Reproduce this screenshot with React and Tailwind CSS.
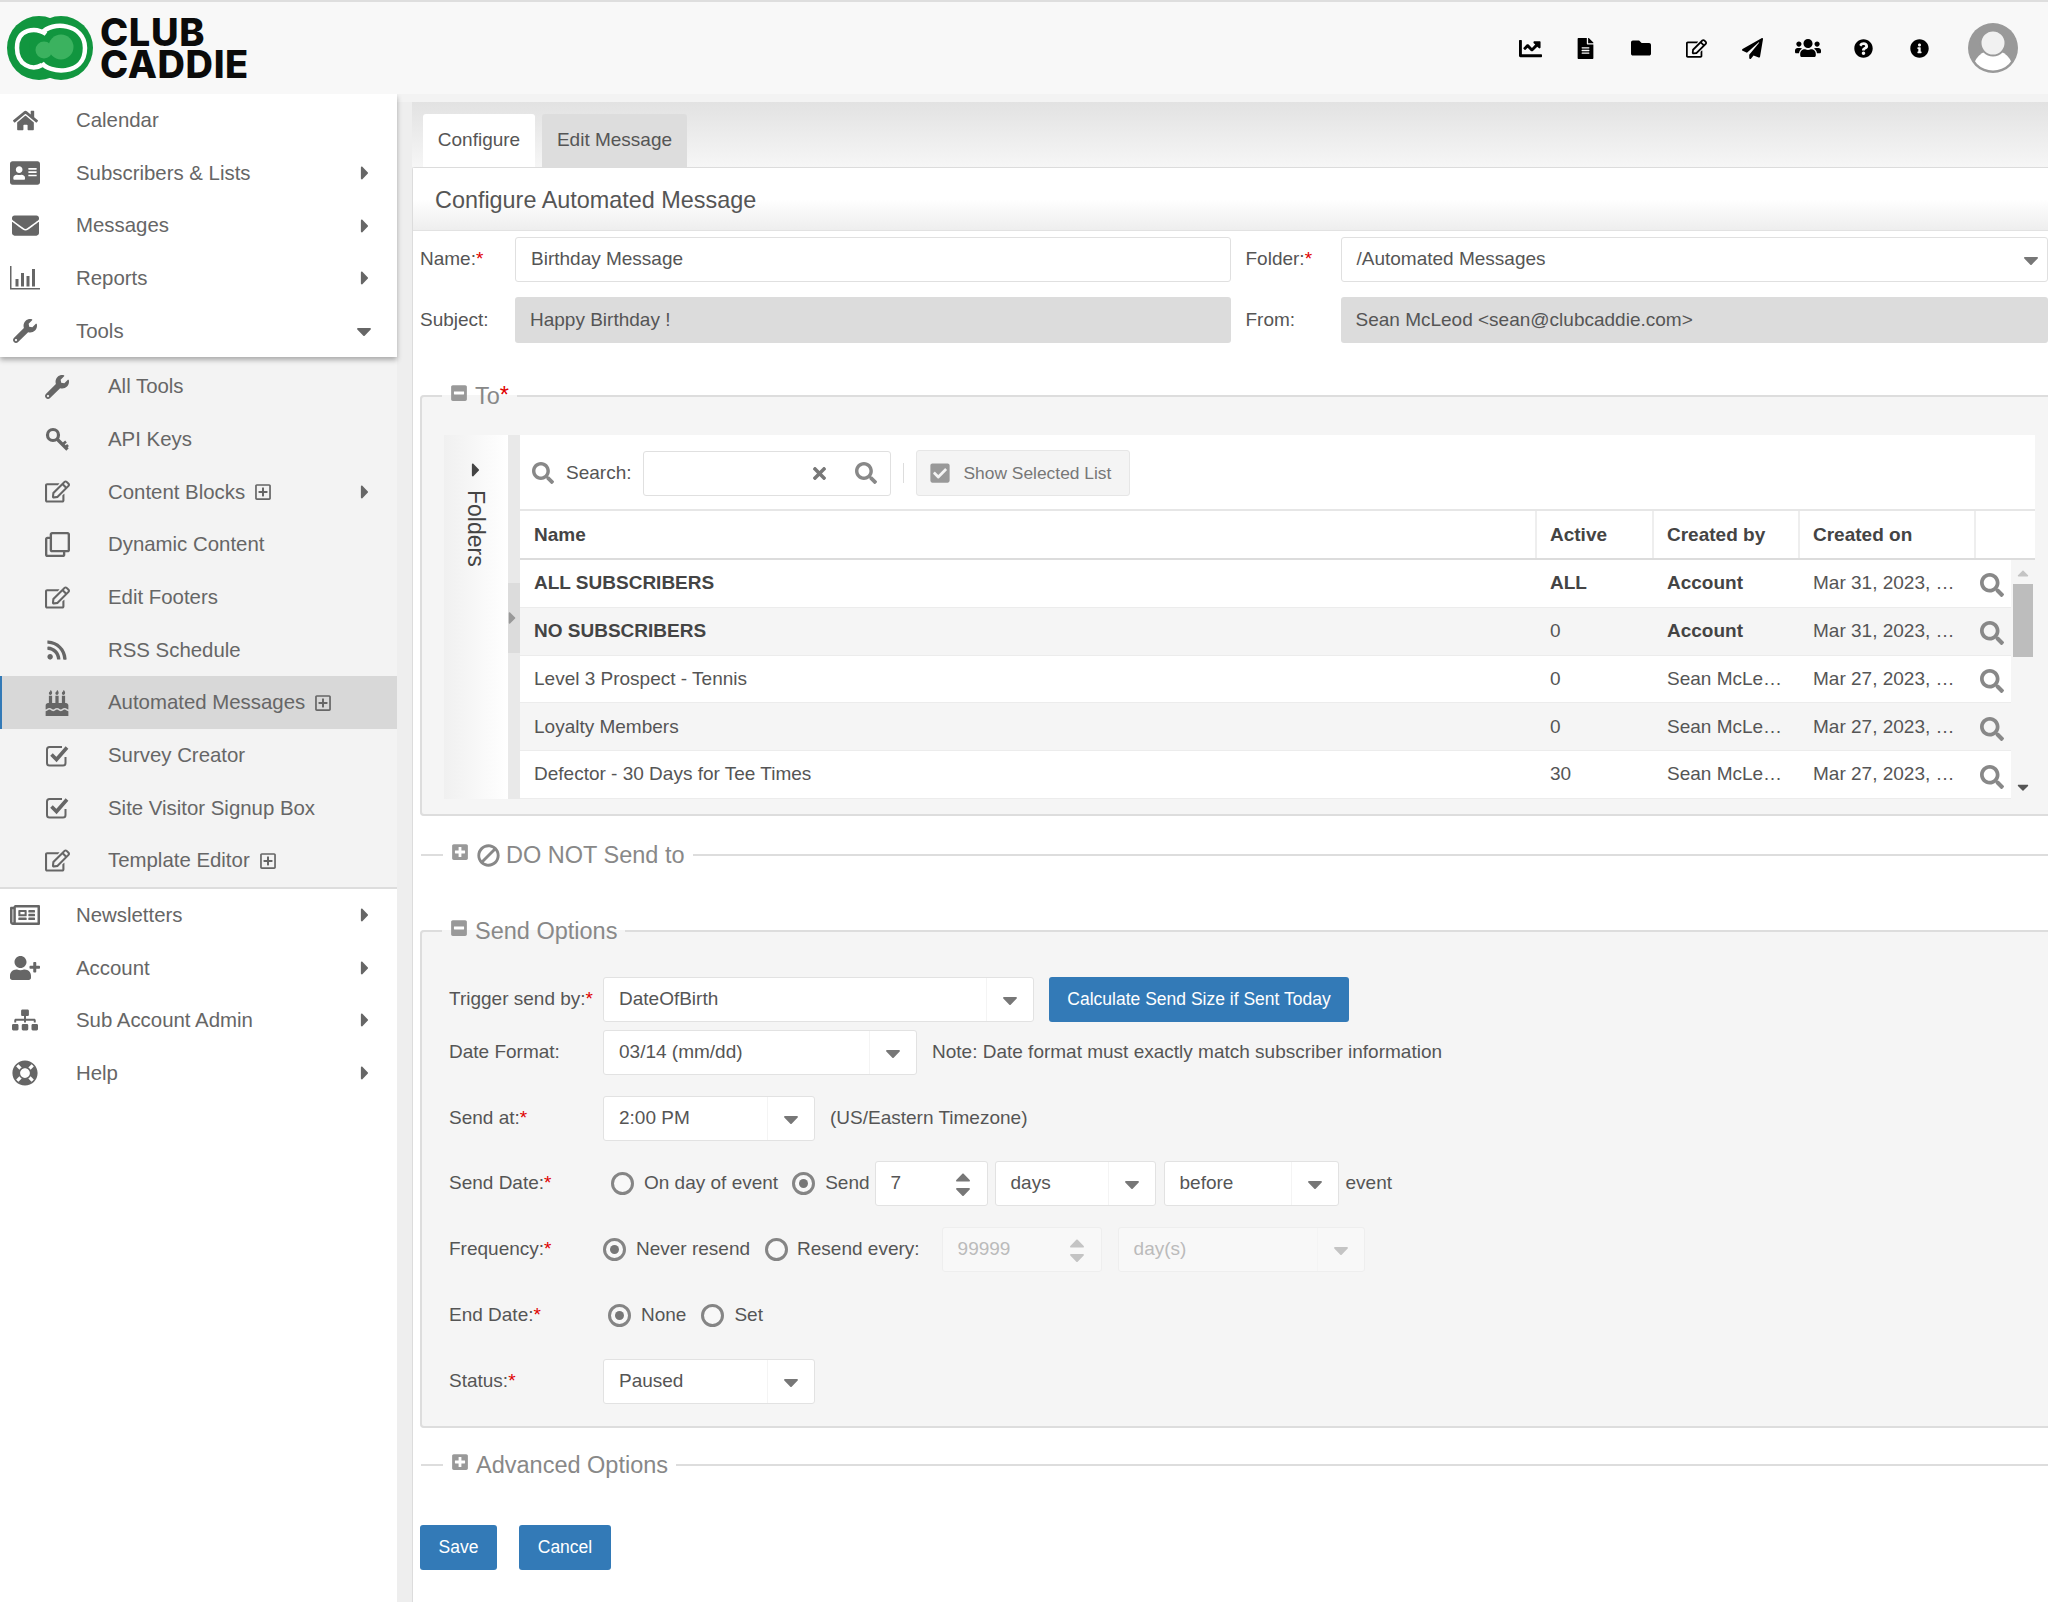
import React from "react";
import {
  FaHome, FaAddressCard, FaEnvelope, FaWrench, FaRegEdit, FaRegClone, FaRss, FaBirthdayCake,
  FaRegNewspaper, FaUserPlus, FaSitemap, FaLifeRing, FaChartLine, FaFileAlt, FaFolder,
  FaPaperPlane, FaUsers, FaQuestionCircle, FaInfoCircle, FaCaretRight, FaCaretDown, FaCaretUp, FaSearch,
  FaTimes, FaCheckSquare, FaPlusSquare, FaMinusSquare, FaBan, FaRegPlusSquare,
} from "react-icons/fa";

const Bars = ({ size = 30 }) => (
  <svg width={size} height={size * 0.8} viewBox="0 0 30 24" fill="#666">
    <path d="M0 0h1.5v22H30v1.6H0z" />
    <rect x="5.5" y="13" width="3" height="7.5" />
    <rect x="11" y="7" width="3" height="13.5" />
    <rect x="16.5" y="10" width="3" height="10.5" />
    <rect x="22" y="3" width="3" height="17.5" />
  </svg>
);

const KeyIcon = () => (
  <svg width="25" height="25" viewBox="0 0 25 25" fill="none" stroke="#666">
    <circle cx="8" cy="8" r="5.5" strokeWidth="3.2" />
    <path d="M12 12l10.5 10.5" strokeWidth="3.4" />
    <path d="M17.5 17.5l3.5-3M20.5 20.5l2.5-2.5" strokeWidth="2.6" />
  </svg>
);

const CheckBox = () => (
  <svg width="25" height="25" viewBox="0 0 25 25" fill="none" stroke="#666">
    <path d="M17 4H4.5A2.5 2.5 0 0 0 2 6.500V20a2.500 2.500 0 0 0 2.500 2.500H18a2.500 2.500 0 0 0 2.500-2.500v-6" strokeWidth="2" />
    <path d="M6.500 11.500l5 5L22 4.500" strokeWidth="3.600" />
  </svg>
);

const Logo = () => (
  <div className="flex items-center">
    <svg width="88" height="66" viewBox="0 0 88 66" className="ml-[6px]">
      <circle cx="33" cy="33" r="32" fill="#11963f" />
      <circle cx="55" cy="33" r="32" fill="#11963f" />
      <path d="M40 19C30 12 11 13 11 33c0 17 15 23 25 17" fill="none" stroke="#fff" strokeWidth="4.500" />
      <path d="M36 48c6 10 43 14 43-15C79 8 45 6 36 18" fill="none" stroke="#fff" strokeWidth="4.500" />
      <circle cx="38" cy="35" r="8.500" fill="#3bb25f" />
      <circle cx="55" cy="32" r="12.500" fill="#3bb25f" />
    </svg>
    <div className="ml-[6px] font-['Inter'] font-extrabold text-[38px] leading-[32px] text-[#0b0b0b] tracking-[0.6px]">
      <div>CLUB</div>
      <div>CADDIE</div>
    </div>
  </div>
);

const Avatar = () => (
  <svg width="50" height="50" viewBox="0 0 50 50">
    <defs>
      <clipPath id="av"><circle cx="25" cy="25" r="22.500" /></clipPath>
    </defs>
    <circle cx="25" cy="25" r="25" fill="#999" />
    <g clipPath="url(#av)">
      <circle cx="25" cy="47" r="20" fill="#fff" />
    </g>
    <circle cx="25" cy="20" r="12.500" fill="#f1f1f1" stroke="#999" strokeWidth="2" />
  </svg>
);

const topIcons = [
  <FaChartLine size={23} />, <FaFileAlt size={21} />, <FaFolder size={20} />, <FaRegEdit size={21} />,
  <FaPaperPlane size={21} />, <FaUsers size={26} />, <FaQuestionCircle size={19} />, <FaInfoCircle size={19} />,
];

const Header = () => (
  <header className="relative z-20 h-[94px] flex items-center border-t-2 border-[#dedede] bg-[#f8f8f8]">
    <Logo />
    <div className="ml-auto flex items-center text-black">
      {topIcons.map((ic, i) => (
        <div key={i} className="w-[55.6px] flex justify-center">{ic}</div>
      ))}
      <div className="ml-[21px] mr-[30px]"><Avatar /></div>
    </div>
  </header>
);

const Item = ({ icon, label, caret, plus, sub, active }) => (
  <div
    className={
      "h-[52.67px] flex items-center text-[20.4px] text-[#666] " +
      (active ? "bg-[#d8d8d8] border-l-2 border-[#337ab7] pl-[30px]" : sub ? "pl-[32px]" : "")
    }
  >
    <div className="w-[50px] mr-[26px] flex justify-center items-center">{icon}</div>
    <span>{label}</span>
    {plus && <FaRegPlusSquare size={18} className="ml-[9px]" />}
    {caret === "right" && <FaCaretRight size={22} className="ml-auto mr-[21px]" />}
    {caret === "down" && <FaCaretDown size={24} className="ml-auto mr-[21px]" />}
  </div>
);

const Sidebar = () => (
  <aside className="w-[397px] shrink-0 bg-white flex flex-col">
    <div className="relative z-10 bg-white shadow-[0_3px_5px_rgba(0,0,0,0.3)]">
      <Item icon={<FaHome size={25} />} label="Calendar" />
      <Item icon={<FaAddressCard size={30} />} label="Subscribers & Lists" caret="right" />
      <Item icon={<FaEnvelope size={27} />} label="Messages" caret="right" />
      <Item icon={<Bars />} label="Reports" caret="right" />
      <Item icon={<FaWrench size={24} />} label="Tools" caret="down" />
    </div>
    <div className="bg-[#f3f3f3] pt-[3px] border-b-2 border-[#dddddd]">
      <Item sub icon={<FaWrench size={24} />} label="All Tools" />
      <Item sub icon={<KeyIcon />} label="API Keys" />
      <Item sub icon={<FaRegEdit size={25} />} label="Content Blocks" plus caret="right" />
      <Item sub icon={<FaRegClone size={25} />} label="Dynamic Content" />
      <Item sub icon={<FaRegEdit size={25} />} label="Edit Footers" />
      <Item sub icon={<FaRss size={22} />} label="RSS Schedule" />
      <Item sub active icon={<FaBirthdayCake size={26} />} label="Automated Messages" plus />
      <Item sub icon={<CheckBox />} label="Survey Creator" />
      <Item sub icon={<CheckBox />} label="Site Visitor Signup Box" />
      <Item sub icon={<FaRegEdit size={25} />} label="Template Editor" plus />
    </div>
    <Item icon={<FaRegNewspaper size={30} />} label="Newsletters" caret="right" />
    <Item icon={<FaUserPlus size={30} />} label="Account" caret="right" />
    <Item icon={<FaSitemap size={26} />} label="Sub Account Admin" caret="right" />
    <Item icon={<FaLifeRing size={26} />} label="Help" caret="right" />
  </aside>
);

const Req = () => <span className="text-[#e00000]">*</span>;

const Select = ({ w, value, disabled }) => (
  <div
    className={
      "h-[45px] shrink-0 flex items-center border rounded-[3px] text-[19px] " +
      (disabled ? "bg-[#f8f8f8] text-[#bbb] border-[#eee] " : "bg-white text-[#555] border-[#e2e2e2] ") +
      w
    }
  >
    <span className="pl-[15px]">{value}</span>
    <div className={"ml-auto w-[47px] h-full flex items-center justify-center border-l border-[#f4f4f4] " + (disabled ? "text-[#c4c4c4]" : "text-[#777]")}>
      <FaCaretDown size={24} />
    </div>
  </div>
);

const Spinner = ({ w, value, disabled }) => (
  <div
    className={
      "h-[45px] shrink-0 flex items-center border rounded-[3px] text-[19px] " +
      (disabled ? "bg-[#f8f8f8] text-[#bbb] border-[#eee] " : "bg-white text-[#555] border-[#e2e2e2] ") +
      w
    }
  >
    <span className="pl-[15px]">{value}</span>
    <div className={"ml-auto w-[47px] flex flex-col items-center leading-none " + (disabled ? "text-[#c4c4c4]" : "text-[#777]")}>
      <FaCaretUp size={24} className="-mb-[5px]" />
      <FaCaretDown size={24} className="-mt-[5px]" />
    </div>
  </div>
);

const Radio = ({ on, className = "" }) => (
  <span className={"shrink-0 w-[23px] h-[23px] rounded-full border-[3px] border-[#858585] bg-[#f8f8f8] flex items-center justify-center " + className}>
    {on && <span className="w-[9px] h-[9px] rounded-full bg-[#777]" />}
  </span>
);

const Legend = ({ icon, children, boxed }) => (
  <legend className={"px-[8px] h-[30px] flex items-center text-[23.5px] leading-[30px] text-[#888] " + (boxed ? "ml-[20px]" : "ml-[22px]")}>
    <span className="text-[#999] mr-[7px] -mt-[6px]">{icon}</span>
    {children}
  </legend>
);

const rows = [
  { n: "ALL SUBSCRIBERS", a: "ALL", by: "Account", on: "Mar 31, 2023, …", bold: true, boldA: true },
  { n: "NO SUBSCRIBERS", a: "0", by: "Account", on: "Mar 31, 2023, …", bold: true },
  { n: "Level 3 Prospect - Tennis", a: "0", by: "Sean McLe…", on: "Mar 27, 2023, …" },
  { n: "Loyalty Members", a: "0", by: "Sean McLe…", on: "Mar 27, 2023, …" },
  { n: "Defector - 30 Days for Tee Times", a: "30", by: "Sean McLe…", on: "Mar 27, 2023, …" },
];

const ListTable = () => (
  <div className="w-[1591px] h-[364px] flex bg-white">
    <div className="w-[64px] shrink-0 bg-linear-to-r from-[#f0f0f0] to-white flex flex-col items-center pt-[24px] text-[#444]">
      <FaCaretRight size={22} />
      <span className="mt-[9px] text-[23px] leading-[24px] text-[#444] [writing-mode:vertical-rl]">Folders</span>
    </div>
    <div className="w-[12px] shrink-0 bg-[#e9e9e9] flex flex-col">
      <div className="mt-[148px] h-[70px] bg-[#dcdcdc] flex items-center text-[#999]">
        <FaCaretRight size={20} className="-ml-[3px]" />
      </div>
    </div>
    <div className="flex-1 flex flex-col min-w-0">
      <div className="h-[76px] shrink-0 flex items-center pl-[12px] pt-[2px] border-b-2 border-[#e6e6e6] text-[19px] text-[#555]">
        <FaSearch size={22} className="text-[#888]" />
        <span className="ml-[12px]">Search:</span>
        <div className="ml-[12px] w-[248px] h-[45px] bg-white border border-[#e0e0e0] rounded-[3px] flex items-center justify-end text-[#777]">
          <FaTimes size={19} className="mr-[26px]" />
          <FaSearch size={22} className="mr-[13px] text-[#888]" />
        </div>
        <div className="ml-[12px] w-px h-[20px] bg-[#ddd]" />
        <div className="ml-[12px] w-[214px] h-[46px] bg-[#f4f4f4] border border-[#e6e6e6] rounded-[3px] flex items-center text-[17.4px] text-[#777]">
          <FaCheckSquare size={22} className="ml-[12px] text-[#999]" />
          <span className="ml-[12px]">Show Selected List</span>
        </div>
      </div>
      <div className="h-[49px] shrink-0 flex items-center border-b-2 border-[#dcdcdc] text-[19px] font-bold text-[#444]">
        <div className="w-[1015px] h-full flex items-center pl-[14px] pt-[2px]">Name</div>
        <div className="w-[117px] h-full flex items-center pl-[13px] pt-[2px] border-l-2 border-[#eee]">Active</div>
        <div className="w-[146px] h-full flex items-center pl-[13px] pt-[2px] border-l-2 border-[#eee]">Created by</div>
        <div className="w-[176px] h-full flex items-center pl-[13px] pt-[2px] border-l-2 border-[#eee]">Created on</div>
        <div className="flex-1 h-full border-l-2 border-[#eee]" />
      </div>
      <div className="flex-1 flex min-h-0">
        <div className="w-[1491px] shrink-0 flex flex-col">
          {rows.map((r, i) => (
            <div key={i} className={"h-[47.8px] shrink-0 flex items-center border-b border-[#ececec] text-[19px] text-[#555] " + (i % 2 ? "bg-[#f5f5f5]" : "bg-white")}>
              <div className={"w-[1015px] pl-[14px] " + (r.bold ? "font-bold text-[#444]" : "")}>{r.n}</div>
              <div className={"w-[117px] pl-[15px] " + (r.boldA ? "font-bold text-[#444]" : "")}>{r.a}</div>
              <div className={"w-[146px] pl-[15px] whitespace-nowrap " + (r.bold ? "font-bold text-[#444]" : "")}>{r.by}</div>
              <div className="w-[176px] pl-[15px] whitespace-nowrap">{r.on}</div>
              <div className="flex-1 flex justify-center pt-[4px] pr-[2px] text-[#888]"><FaSearch size={24} /></div>
            </div>
          ))}
        </div>
        <div className="flex-1 bg-[#f5f5f5] flex flex-col items-center">
          <FaCaretUp size={18} className="text-[#c4c4c4] mt-[4px]" />
          <div className="w-[20px] h-[73px] bg-[#bdbdbd] mt-[2px]" />
          <FaCaretDown size={18} className="text-[#555] mt-[121px]" />
        </div>
      </div>
    </div>
  </div>
);

const SendRow = ({ label, req, children, className = "" }) => (
  <div className={"h-[45px] flex items-center " + className}>
    <div className="w-[154px] shrink-0">{label}{req && <Req />}</div>
    {children}
  </div>
);

const SendOptions = () => (
  <fieldset className="ml-[7px] w-[1700px] mt-[46px] border-2 border-[#ddd] rounded-[4px] bg-[#f5f5f5] pt-[31px] pb-[22px] text-[19px] text-[#555]">
    <Legend boxed icon={<FaMinusSquare size={18} />}>Send Options</Legend>
    <div className="pl-[27px]">
      <SendRow label="Trigger send by:" req>
        <Select w="w-[431px]" value="DateOfBirth" />
        <button className="ml-[15px] w-[300px] h-[45px] bg-[#337ab7] rounded-[3px] text-white text-[17.5px]">Calculate Send Size if Sent Today</button>
      </SendRow>
      <SendRow label="Date Format:" className="mt-[8px]">
        <Select w="w-[314px]" value="03/14 (mm/dd)" />
        <span className="ml-[15px]">Note: Date format must exactly match subscriber information</span>
      </SendRow>
      <SendRow label="Send at:" req className="mt-[21px]">
        <Select w="w-[212px]" value="2:00 PM" />
        <span className="ml-[15px]">(US/Eastern Timezone)</span>
      </SendRow>
      <SendRow label="Send Date:" req className="mt-[20px]">
        <Radio className="ml-[8px]" />
        <span className="ml-[10px]">On day of event</span>
        <Radio className="ml-[14px]" on />
        <span className="ml-[10px]">Send</span>
        <Spinner w="w-[113px] ml-[5px]" value="7" />
        <Select w="w-[161px] ml-[7px]" value="days" />
        <Select w="w-[175px] ml-[8px]" value="before" />
        <span className="ml-[7px]">event</span>
      </SendRow>
      <SendRow label="Frequency:" req className="mt-[21px]">
        <Radio on />
        <span className="ml-[10px]">Never resend</span>
        <Radio className="ml-[15px]" />
        <span className="ml-[9px]">Resend every:</span>
        <Spinner disabled w="w-[160px] ml-[22px]" value="99999" />
        <Select disabled w="w-[247px] ml-[16px]" value="day(s)" />
      </SendRow>
      <SendRow label="End Date:" req className="mt-[21px]">
        <Radio className="ml-[5px]" on />
        <span className="ml-[10px]">None</span>
        <Radio className="ml-[15px]" />
        <span className="ml-[10px]">Set</span>
      </SendRow>
      <SendRow label="Status:" req className="mt-[21px]">
        <Select w="w-[212px]" value="Paused" />
      </SendRow>
    </div>
  </fieldset>
);

const Main = () => (
  <main className="flex-1 min-w-0 ml-[15px] flex flex-col">
    <div className="h-[65px] shrink-0 bg-linear-to-b from-[#e2e2e2] to-[#f6f6f6] flex items-end pl-[11px] text-[19px] text-[#555]">
      <div className="w-[112px] h-[53px] bg-white rounded-t-[3px] flex items-center justify-center">Configure</div>
      <div className="ml-[7px] w-[145px] h-[53px] bg-[#dddddd] rounded-t-[3px] flex items-center justify-center">Edit Message</div>
    </div>
    <div className="flex-1 bg-white border-l border-t border-[#dcdcdc] rounded-tl-[3px] min-h-0">
      <div className="h-[63px] bg-linear-to-b from-white from-50% to-[#eeeeee] border-b border-[#e2e2e2] flex items-center pl-[22px] pt-[3px] text-[23.4px] text-[#555]">
        Configure Automated Message
      </div>
      <div className="pt-[6px] pl-[7px] text-[19px] text-[#555]">
        <div className="h-[45px] flex items-center">
          <div className="w-[95px] shrink-0">Name:<Req /></div>
          <div className="w-[716px] h-full flex items-center pl-[15px] bg-white border border-[#e0e0e0] rounded-[3px]">Birthday Message</div>
          <div className="w-[95px] ml-[15px] shrink-0">Folder:<Req /></div>
          <div className="w-[708px] h-full flex items-center pl-[15px] bg-white border border-[#e0e0e0] rounded-[3px]">
            /Automated Messages
            <FaCaretDown size={24} className="ml-auto mr-[4px] text-[#777]" />
          </div>
        </div>
        <div className="h-[46px] mt-[15px] flex items-center">
          <div className="w-[95px] shrink-0">Subject:</div>
          <div className="w-[716px] h-full flex items-center pl-[15px] bg-[#dcdcdc] rounded-[3px]">Happy Birthday !</div>
          <div className="w-[95px] ml-[15px] shrink-0">From:</div>
          <div className="w-[708px] h-full flex items-center pl-[15px] bg-[#dcdcdc] rounded-[3px]">Sean McLeod &lt;sean@clubcaddie.com&gt;</div>
        </div>
      </div>
      <fieldset className="ml-[7px] w-[1700px] mt-[38px] border-2 border-[#ddd] rounded-[4px] bg-[#f5f5f5] pt-[24px] pb-[15px]">
        <Legend boxed icon={<FaMinusSquare size={18} />}>To<span className="text-[#e00000] -mt-[2px]">*</span></Legend>
        <div className="pl-[22px]"><ListTable /></div>
      </fieldset>
      <fieldset className="ml-[8px] w-[1700px] mt-[24px] border-t-2 border-[#ddd]">
        <Legend icon={<FaPlusSquare size={18} />}>
          <FaBan size={23} className="mr-[6px] ml-[1px] text-[#888] -scale-x-100" />
          DO NOT Send to
        </Legend>
      </fieldset>
      <SendOptions />
      <fieldset className="ml-[8px] w-[1700px] mt-[22px] border-t-2 border-[#ddd]">
        <Legend icon={<FaPlusSquare size={18} />}>Advanced Options</Legend>
      </fieldset>
      <div className="ml-[7px] mt-[45px] flex text-[17.5px] text-white">
        <button className="w-[77px] h-[45px] bg-[#337ab7] rounded-[3px]">Save</button>
        <button className="ml-[22px] w-[92px] h-[45px] bg-[#337ab7] rounded-[3px]">Cancel</button>
      </div>
    </div>
  </main>
);

export default function App() {
  return (
    <div className="w-[2048px] h-[1602px] overflow-hidden flex flex-col bg-[#eeeeee] font-['Liberation_Sans',Arial,sans-serif]">
      <Header />
      <div className="flex-1 flex min-h-0 pt-0">
        <Sidebar />
        <div className="flex-1 min-w-0 flex flex-col">
          <div className="h-[8px] shrink-0 bg-[#f3f3f3]" />
          <Main />
        </div>
      </div>
    </div>
  );
}
